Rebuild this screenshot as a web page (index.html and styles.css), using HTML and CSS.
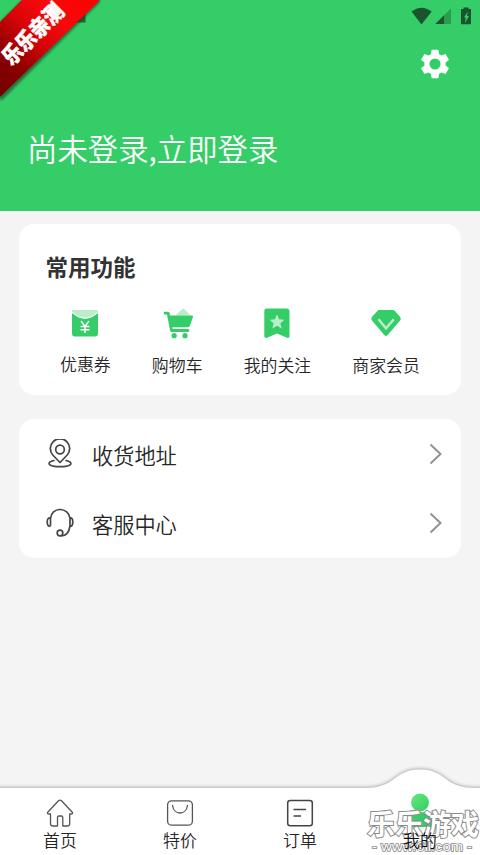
FILE: index.html
```html
<!DOCTYPE html>
<html lang="zh-CN">
<head>
<meta charset="utf-8">
<title>我的</title>
<link rel="stylesheet" href="styles.css">
</head>
<body>
<div class="app">
  <header class="header">
    <div class="status">
      <svg width="62" height="20" viewBox="0 0 62 20">
        <path d="M0.5 4.500Q10.500-3.200 20.700 4.500L10.500 17.500Z" fill="#19542f"/>
        <path d="M40 1.500V17H24.300Z" fill="#2a9c50"/>
        <path d="M33 8.500V17H24.300Z" fill="#19542f"/>
        <path d="M52.500 0.500h5v1.500h2.500v15.300h-10V2h2.500z" fill="#19542f"/>
        <path d="M56.700 4.500l-3.700 6h1.800l-.8 5.500 4-7h-2z" fill="#34cd67"/>
      </svg>
    </div>
    <div class="tools">
      <svg class="gear" width="34" height="34" viewBox="0 0 24 24"><path fill="#fff" d="M19.430 12.980c.04-.32.070-.64.070-.98s-.03-.66-.07-.98l2.110-1.650c.19-.15.240-.42.120-.64l-2-3.460c-.12-.22-.39-.3-.61-.22l-2.490 1c-.52-.4-1.080-.73-1.690-.98l-.38-2.650C14.460 2.180 14.250 2 14 2h-4c-.25 0-.46.180-.49.420l-.38 2.650c-.61.250-1.170.59-1.690.98l-2.490-1c-.23-.09-.49 0-.61.220l-2 3.460c-.13.220-.07.490.12.640l2.110 1.650c-.04.320-.07.650-.07.980s.03.660.07.980l-2.110 1.650c-.19.150-.24.420-.12.640l2 3.460c.12.220.39.300.61.220l2.490-1c.52.400 1.080.730 1.690.980l.38 2.650c.03.240.24.420.49.420h4c.25 0 .46-.18.490-.42l.38-2.650c.61-.25 1.170-.59 1.690-.98l2.490 1c.23.090.49 0 .61-.22l2-3.460c.12-.22.070-.49-.12-.64zM12 15.900a3.900 3.900 0 1 1 0-7.800 3.900 3.900 0 0 1 0 7.800z"/></svg>
    </div>
    <div class="login">尚未登录,立即登录</div>
    <svg class="ribbon" width="104" height="104" viewBox="0 0 104 104">
      <defs>
        <linearGradient id="red" x1="0" y1="98" x2="98" y2="0" gradientUnits="userSpaceOnUse">
          <stop offset="0" stop-color="#730000"/><stop offset=".25" stop-color="#8c0000"/><stop offset=".5" stop-color="#d90408"/><stop offset=".7" stop-color="#f8080c"/><stop offset="1" stop-color="#f00"/>
        </linearGradient>
        <filter id="soft"><feGaussianBlur stdDeviation="1.300"/></filter>
      </defs>
      <path d="M76 14h9.500v8.500H76Z" fill="#19542f" opacity=".85"/>
      <path d="M22 0H100V2L2 100H0V22Z" fill="#153d20" opacity=".6" filter="url(#soft)"/>
      <path d="M22 0H100L0 97V22Z" fill="url(#red)"/>
    </svg>
    <span class="ribbon-text">乐乐亲测</span>
  </header>

  <main class="content">
    <section class="card features">
      <h2 class="card-title">常用功能</h2>
      <div class="feature-row">
        <div class="feature coupon">
          <svg width="32" height="32" viewBox="0 0 32 32">
            <path d="M3 3H29V9Q16 18 3 9Z" fill="#bbedcb"/>
            <path d="M3 6Q16 17.500 29 6V26.500a3 3 0 0 1-3 3H6a3 3 0 0 1-3-3Z" fill="#34cd67"/>
            <path d="M3 5.500Q16 17 29 5.500" fill="none" stroke="#fff" stroke-width="1"/>
            <path d="M12 14l4 5.500 4-5.500M16 19.500V26M11.500 19.500h9M11.500 22.800h9" fill="none" stroke="#fff" stroke-width="1.500"/>
          </svg><span>优惠券</span>
        </div>
        <div class="feature">
          <svg width="32" height="32" viewBox="0 0 32 32">
            <path d="M14 8.500L21.500 2Q22.500 1.200 23.500 2L29.500 8.500Z" fill="#bbedcb"/>
            <path d="M4 6.200H7.200L10.500 23.500H27" fill="none" stroke="#34cd67" stroke-width="2.800" stroke-linecap="round" stroke-linejoin="round"/>
            <path d="M7.500 8.500H30.500Q32.500 8.500 31.800 10.500L29 18.500Q28.500 20.200 26.500 20.200H9.800Z" fill="#34cd67"/>
            <circle cx="13.200" cy="28.700" r="2.600" fill="#34cd67"/><circle cx="24" cy="28.700" r="2.600" fill="#34cd67"/>
          </svg><span>购物车</span>
        </div>
        <div class="feature">
          <svg width="32" height="32" viewBox="0 0 32 32">
            <path d="M5.500 1.500h20a3 3 0 0 1 3 3V29.500q0 2-2.500 1.300L16 26.500 6 30.800Q3.300 31.500 3.300 29V4.500q0-3 2.200-3Z" fill="#34cd67"/>
            <path d="M16 7.300l2.100 4.900 5.300.5-4 3.500 1.200 5.200-4.600-2.700-4.600 2.700 1.200-5.200-4-3.500 5.300-.5Z" fill="#bbedcb"/>
          </svg><span>我的关注</span>
        </div>
        <div class="feature">
          <svg width="32" height="32" viewBox="0 0 32 32">
            <path d="M9.500 3h13q1.300 0 2.200.8l5.300 6q1.700 2-.1 4L17.500 28.200q-1.500 1.600-3 0L2.200 13.800q-1.800-2-.1-4L7.300 3.900Q8.200 3 9.500 3Z" fill="#34cd67"/>
            <path d="M8.500 12.300L16 21.300 23.800 12.300" fill="none" stroke="#bbedcb" stroke-width="2.500"/>
          </svg><span>商家会员</span>
        </div>
      </div>
    </section>

    <section class="card list">
      <div class="row">
        <svg class="row-icon" width="30" height="30" viewBox="0 0 30 30" fill="none" stroke="#464646" stroke-width="1.700">
          <path d="M15 23.500L7.800 16A9.700 9.700 0 1 1 22.200 16Z" stroke-linejoin="round"/><circle cx="15" cy="10.500" r="4.300"/>
          <path d="M9 21.500C1 23.200 2.500 27.700 15 27.700S29 23.200 21 21.500" stroke-linecap="round"/>
        </svg>
        <span>收货地址</span>
        <svg class="arrow" width="14" height="22" viewBox="0 0 14 22"><path d="M1.500 1.500L11.500 11L1.500 20.500" fill="none" stroke="#929292" stroke-width="2"/></svg>
      </div>
      <div class="row">
        <svg class="row-icon" width="30" height="30" viewBox="0 0 30 30" fill="none" stroke="#464646" stroke-width="1.700">
          <path d="M5.500 18V10.500C6 5 10 1.500 15 1.500S24.500 5 25 10.500V18"/>
          <path d="M5.500 10Q2.200 9.500 2.200 14T5.500 18.500M25 10Q27.800 9.500 27.800 14T25 18.500M25 18Q23.500 28 16 28"/>
          <circle cx="15" cy="25" r="2.800"/>
        </svg>
        <span>客服中心</span>
        <svg class="arrow" width="14" height="22" viewBox="0 0 14 22"><path d="M1.500 1.500L11.500 11L1.500 20.500" fill="none" stroke="#929292" stroke-width="2"/></svg>
      </div>
    </section>
  </main>

  <nav class="tabs">
    <svg class="tabs-bg" width="480" height="95" viewBox="0 0 480 95">
      <defs><filter id="shade" x="-5%" y="-20%" width="110%" height="140%"><feGaussianBlur stdDeviation="2"/></filter></defs>
      <path d="M-10 28H365C397 28 393 9.500 420 9.500S443 28 475 28H490V110H-10Z" fill="#000" opacity=".42" filter="url(#shade)"/>
      <path d="M-10 28H365C397 28 393 9.500 420 9.500S443 28 475 28H490V110H-10Z" fill="#fff"/>
    </svg>
    <div class="tab">
      <svg width="30" height="30" viewBox="0 0 30 30" fill="none" stroke="#555" stroke-width="1.300" stroke-linejoin="round"><path d="M13.500 2.800Q15 1.500 16.500 2.800L27.500 14.500Q28 16 26 16H24.700V25.500Q24.700 28 22.500 28H17.800V19.500Q17.800 18 16.500 18H14Q12.500 18 12.500 19.500V28H8Q5.500 28 5.500 25.500V16H4Q2 16 2.500 14.500Z"/></svg>
      <span>首页</span>
    </div>
    <div class="tab">
      <svg width="30" height="30" viewBox="0 0 30 30" fill="none" stroke="#555" stroke-width="1.300"><rect x="2.600" y="2.800" width="24.800" height="24.400" rx="4"/><path d="M7.500 7.500C9 17.500 21 17.500 22.500 7.500" stroke-linecap="round"/></svg>
      <span>特价</span>
    </div>
    <div class="tab">
      <svg width="30" height="30" viewBox="0 0 30 30" fill="none" stroke="#444" stroke-width="1.500"><rect x="2.700" y="2.500" width="24.600" height="25.200" rx="2.500"/><path d="M8.500 11.500H21M8.500 18H16"/></svg>
      <span>订单</span>
    </div>
    <div class="tab active">
      <svg width="30" height="36" viewBox="0 0 30 36"><defs><linearGradient id="user" x1="0" y1="0" x2="1" y2="1"><stop stop-color="#65e97a"/><stop offset="1" stop-color="#34cd67"/></linearGradient></defs><circle cx="15" cy="10.500" r="9" fill="url(#user)"/><path d="M2.500 35V29Q3 20 15 20T27.500 29V35Z" fill="#34cd67"/></svg>
      <span>我的</span>
    </div>
    <svg class="mark" width="120" height="55" viewBox="0 0 120 55">
      <text class="mark-name" x="7" y="35" textLength="112" lengthAdjust="spacingAndGlyphs">乐乐游戏</text>
      <text class="mark-url" x="12" y="51" textLength="100" lengthAdjust="spacingAndGlyphs">- www.6ll.com -</text>
    </svg>
  </nav>
</div>
</body>
</html>
```

FILE: styles.css
```css
* { box-sizing: border-box; }
body { margin: 0; background: #f4f4f4; font-family: "Noto Sans CJK SC", sans-serif; font-weight: 350; color: #262626; }
.app { height: 855px; display: flex; flex-direction: column; overflow: hidden; }
.header { position: relative; height: 211px; background: #34cd67; flex: none; }
.status { height: 36px; padding: 7px 7px 0 0; display: flex; justify-content: flex-end; align-items: flex-start; }
.tools { display: flex; justify-content: flex-end; padding: 11px 28px 0 0; }
.gear { display: block; }
.login { margin: 44px 0 0 27px; color: #fff; font-size: 30.400px; line-height: 46px; }
.ribbon { position: absolute; left: 0; top: 0; }
.ribbon-text { position: absolute; left: -18px; top: 21px; width: 100px; text-align: center; line-height: 24px; font-size: 19px; font-weight: 900; color: #fff; -webkit-text-stroke: .5px #fff; transform: rotate(-45deg) scaleY(1.15); white-space: nowrap; }
.content { flex: 1; padding: 13px 19px 0; display: flex; flex-direction: column; gap: 24px; }
.card { background: #fff; border-radius: 15px; }
.features { height: 171px; padding-top: 25px; }
.card-title { margin: 0 0 0 26.500px; font-size: 22.500px; line-height: 34px; font-weight: 700; color: #333; }
.feature-row { display: flex; justify-content: space-evenly; margin-top: 24px; }
.feature { display: flex; flex-direction: column; align-items: center; gap: 13px; font-size: 16.900px; line-height: 26px; white-space: nowrap; }
.feature svg { display: block; }
.coupon { gap: 12px; }
.list { height: 139px; }
.row { height: 69.500px; display: flex; align-items: center; padding: 0 18px 0 26px; font-size: 21.200px; line-height: 32px; }
.row span { margin-left: 17px; padding-top: 2px; }
.arrow { margin-left: auto; }
.tabs { position: relative; height: 95px; flex: none; display: flex; padding-top: 38px; }
.tabs-bg { position: absolute; left: 0; top: 0; }
.tab { position: relative; flex: 1; display: flex; flex-direction: column; align-items: center; font-size: 16.900px; line-height: 24px; }
.tab svg { display: block; flex: none; }
.active { margin-top: -6px; color: #111; }
.active span { position: relative; z-index: 2; }
.mark { position: absolute; right: 0; bottom: 0; z-index: 1; }
.mark text { fill: #fff; stroke: #8a8a8a; stroke-width: 2px; paint-order: stroke; }
.mark-name { font-size: 28px; font-weight: 700; }
.mark .mark-url { font-family: "Liberation Sans", sans-serif; font-size: 13px; stroke-width: 1.500px; }
```
